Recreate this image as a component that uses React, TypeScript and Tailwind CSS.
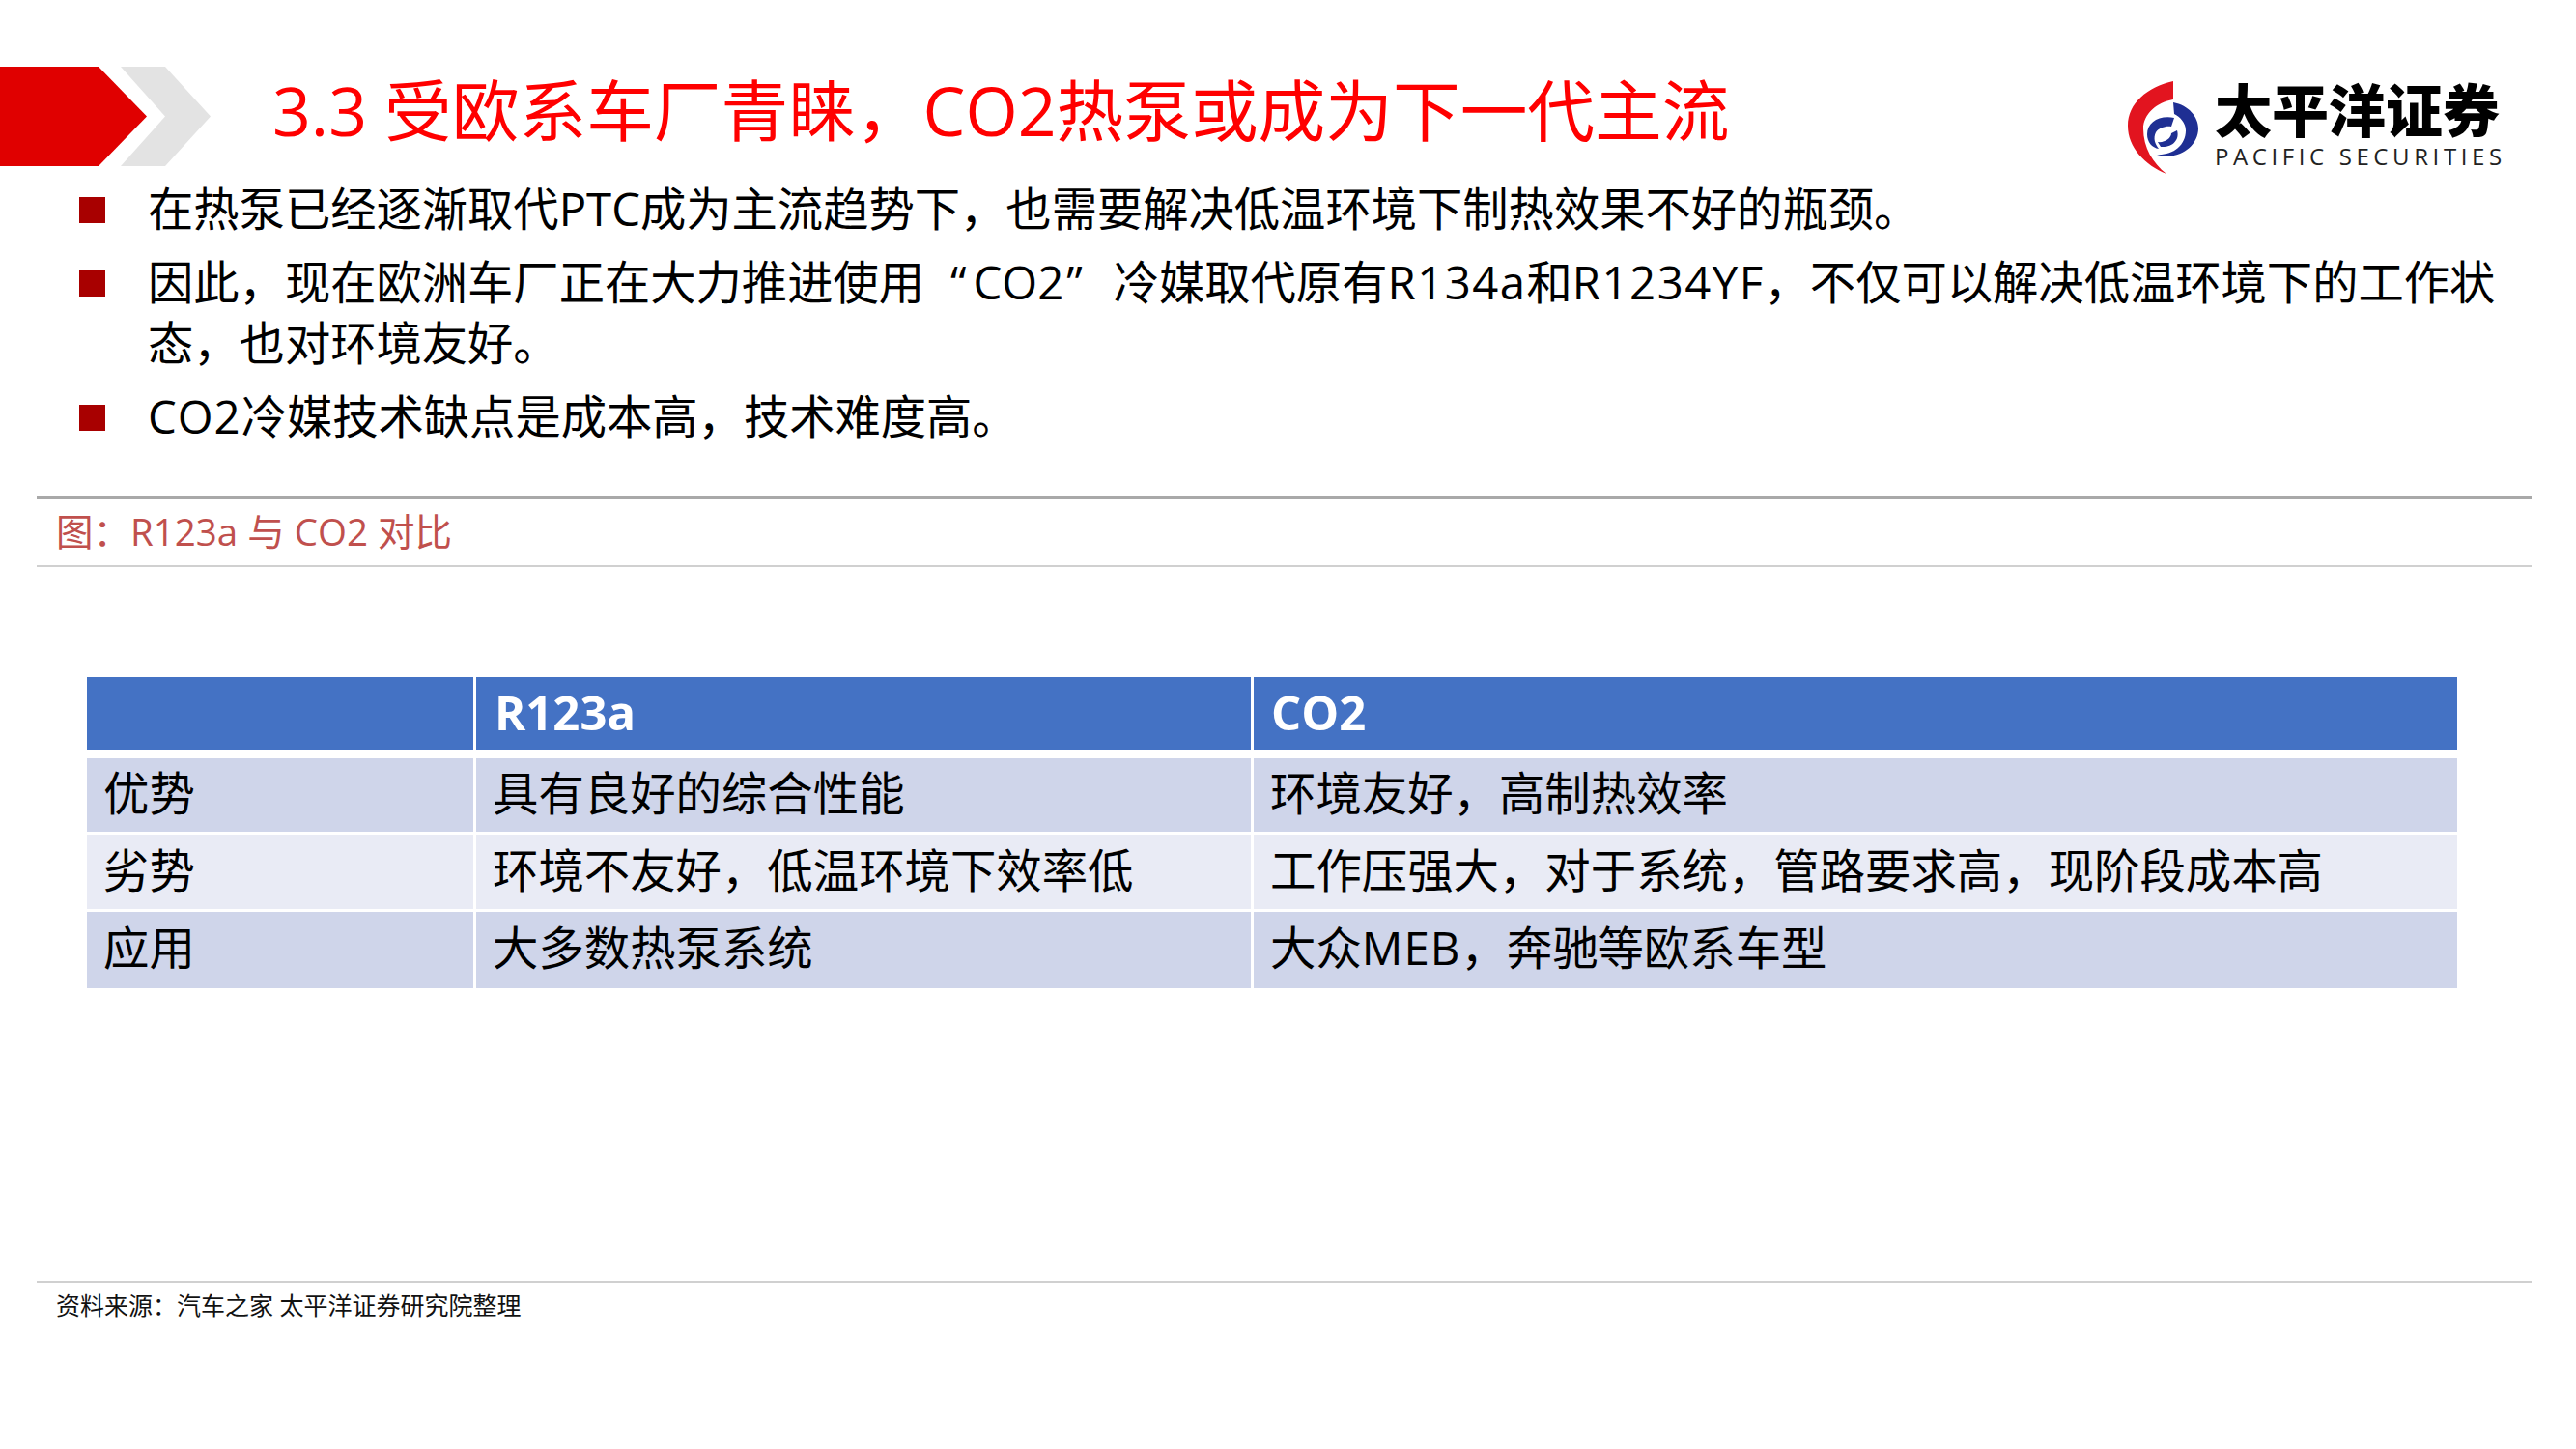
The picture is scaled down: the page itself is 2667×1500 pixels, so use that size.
const sans = "font-['Open_Sans','Noto_Sans_CJK_SC',sans-serif]";

const rows = [
  { name: '优势', a: '具有良好的综合性能', b: '环境友好，高制热效率', bg: 'bg-[#cfd5ea]', h: 'h-[76px]', lh: 'leading-[72px]' },
  { name: '劣势', a: '环境不友好，低温环境下效率低', b: '工作压强大，对于系统，管路要求高，现阶段成本高', bg: 'bg-[#e9ebf5]', h: 'h-[77px]', lh: 'leading-[74px]' },
  { name: '应用', a: '大多数热泵系统', b: <>大众<span className="tracking-[1px]">MEB</span>，奔驰等欧系车型</>, bg: 'bg-[#cfd5ea]', h: 'h-[79px]', lh: 'leading-[74px]' },
];

const Arrow = () => (
  <svg width="220" height="103" viewBox="0 0 220 103" className="shrink-0">
    <polygon points="0,0 102,0 152,51.5 102,103 0,103" fill="#e00000" />
    <polygon points="125,0 171,0 218,51.5 171,103 125,103 171,51.5" fill="#e3e3e3" />
  </svg>
);

const LogoMark = () => (
  <svg width="76" height="100" viewBox="0 0 76 100" className="shrink-0">
    <path d="M49 1 C22 7 2 24 2 47 C2 70 20 88 42 97 C28 86 18 70 18 50 C18 35 32 23 49 20 Z" fill="#e2141f" />
    <path d="M49 23 C65 26 75 38 75 50 C75 68 55 84 32 77 C48 78 62 68 62 52 C62 44 56 38 50 35 Z" fill="#1f2f93" />
    <path d="M50 39 C34 36 22 44 22 56 C22 64 27 70 34 71 C30 66 28 60 31 54 C34 49 42 47 47 48 Z" fill="#1f2f93" />
    <path d="M53 52 C56 62 48 70 36 69 L33 64 C40 65 47 60 47 55 Z" fill="#1f2f93" />
  </svg>
);

const Bullet = ({ children }: { children: React.ReactNode }) => (
  <li className="flex">
    <div className="mt-[20px] w-[27px] h-[27px] bg-[#a80000] shrink-0" />
    <div className="ml-[44px] text-[47.3px] leading-[63px] text-black">{children}</div>
  </li>
);

export default function App() {
  return (
    <div className={`w-[2667px] h-[1500px] bg-white overflow-hidden ${sans}`}>
      {/* Title bar */}
      <div className="flex h-[190px] items-start pt-[69px]">
        <Arrow />
        <h1 className="ml-[62px] flex-1 mt-[-5px] whitespace-nowrap text-[69.7px] leading-[100px] text-[#ff0000] font-normal">
          3.3 受欧系车厂青睐，CO2热泵或成为下一代主流
        </h1>
        <div className="mr-[78px] mt-[14px] flex gap-[16px]">
          <LogoMark />
          <div className="w-[296px]">
            <div className="text-[59px] leading-[62px] font-black text-black whitespace-nowrap">太平洋证券</div>
            <div className="mt-[2px] text-[24px] leading-[30px] tracking-[4.6px] text-[#222] whitespace-nowrap">PACIFIC SECURITIES</div>
          </div>
        </div>
      </div>

      {/* Bullets */}
      <ul className="ml-[82px] mt-[-6px] w-[2540px] flex flex-col gap-[13px]">
        <Bullet>
          <div className="whitespace-nowrap">在热泵已经逐渐取代PTC成为主流趋势下，也需要解决低温环境下制热效果不好的瓶颈。</div>
        </Bullet>
        <Bullet>
          <div className="whitespace-nowrap">
            因此，现在欧洲车厂正在大力推进使用<span className="ml-[27px] mr-[7px]">“</span>CO2<span className="ml-[3px] mr-[32px]">”</span>冷媒取代原有<span className="tracking-[1.5px]">R134a</span>和<span className="tracking-[1.5px]">R1234YF</span>，不仅可以解决低温环境下的工作状
          </div>
          <div className="whitespace-nowrap">态，也对环境友好。</div>
        </Bullet>
        <Bullet>
          <div className="whitespace-nowrap"><span className="tracking-[1px]">CO2</span>冷媒技术缺点是成本高，技术难度高。</div>
        </Bullet>
      </ul>

      {/* Caption */}
      <div className="ml-[38px] mr-[46px] mt-[51px] h-[74px] border-t-4 border-b-2 border-t-[#a9a9a9] border-b-[#d0d0d0] pl-[20px] text-[38.5px] leading-[66px] text-[#c0504d]">
        图：R123a 与 CO2 对比
      </div>

      {/* Table */}
      <div className="ml-[90px] mt-[114px] w-[2454px] text-[47.4px] text-black">
        <div className="grid h-[75px] grid-cols-[400px_802px_1fr] gap-x-[3px] mb-[9px]">
          <div className="bg-[#4472c4]" />
          <div className="bg-[#4472c4] pl-[19px] text-[49px] font-bold text-white leading-[73px]">R123a</div>
          <div className="bg-[#4472c4] pl-[18px] text-[49px] font-bold text-white leading-[73px]">CO2</div>
        </div>
        <div className="flex flex-col gap-[3px]">
          {rows.map((row) => (
            <div key={row.name} className={`grid grid-cols-[400px_802px_1fr] gap-x-[3px] ${row.h} ${row.lh}`}>
              <div className={`${row.bg} pl-[17px]`}>{row.name}</div>
              <div className={`${row.bg} pl-[17px]`}>{row.a}</div>
              <div className={`${row.bg} pl-[17px]`}>{row.b}</div>
            </div>
          ))}
        </div>
      </div>

      {/* Source */}
      <div className="ml-[38px] mr-[46px] mt-[303px] border-t-2 border-t-[#d0d0d0] pl-[20px] text-[25px] leading-[46px] text-[#111]">
        资料来源：汽车之家 太平洋证券研究院整理
      </div>
    </div>
  );
}
